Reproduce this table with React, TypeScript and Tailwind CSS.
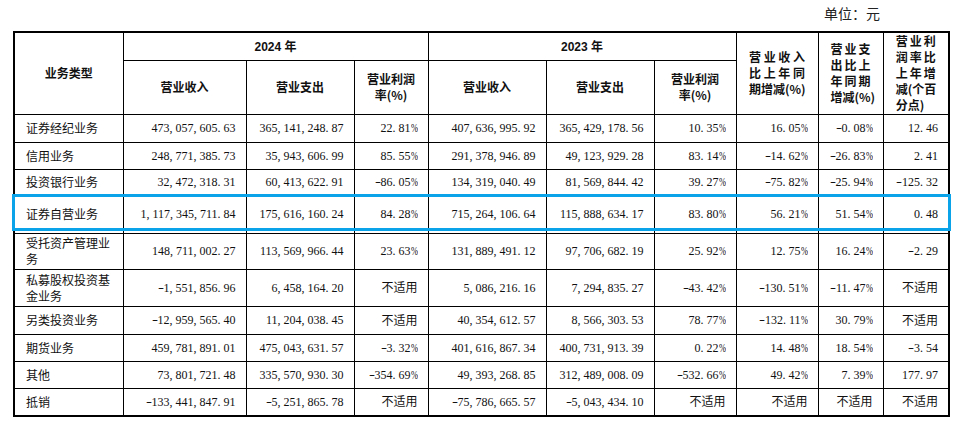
import React from 'react';

const cjk = "font-['Noto_Sans_CJK_SC',sans-serif]";

const rows: string[][] = [
  ['证券经纪业务', '473,057,605.63', '365,141,248.87', '22.81%', '407,636,995.92', '365,429,178.56', '10.35%', '16.05%', '-0.08%', '12.46'],
  ['信用业务', '248,771,385.73', '35,943,606.99', '85.55%', '291,378,946.89', '49,123,929.28', '83.14%', '-14.62%', '-26.83%', '2.41'],
  ['投资银行业务', '32,472,318.31', '60,413,622.91', '-86.05%', '134,319,040.49', '81,569,844.42', '39.27%', '-75.82%', '-25.94%', '-125.32'],
  ['证券自营业务', '1,117,345,711.84', '175,616,160.24', '84.28%', '715,264,106.64', '115,888,634.17', '83.80%', '56.21%', '51.54%', '0.48'],
  ['受托资产管理业务', '148,711,002.27', '113,569,966.44', '23.63%', '131,889,491.12', '97,706,682.19', '25.92%', '12.75%', '16.24%', '-2.29'],
  ['私募股权投资基金业务', '-1,551,856.96', '6,458,164.20', '不适用', '5,086,216.16', '7,294,835.27', '-43.42%', '-130.51%', '-11.47%', '不适用'],
  ['另类投资业务', '-12,959,565.40', '11,204,038.45', '不适用', '40,354,612.57', '8,566,303.53', '78.77%', '-132.11%', '30.79%', '不适用'],
  ['期货业务', '459,781,891.01', '475,043,631.57', '-3.32%', '401,616,867.34', '400,731,913.39', '0.22%', '14.48%', '18.54%', '-3.54'],
  ['其他', '73,801,721.48', '335,570,930.30', '-354.69%', '49,393,268.85', '312,489,008.09', '-532.66%', '49.42%', '7.39%', '177.97'],
  ['抵销', '-133,441,847.91', '-5,251,865.78', '不适用', '-75,786,665.57', '-5,043,434.10', '不适用', '不适用', '不适用', '不适用'],
];

const rowHeights = ['h-[28px]', 'h-[27px]', 'h-[26px]', 'h-[38px]', 'h-[36px]', 'h-[37px]', 'h-[28px]', 'h-[27px]', 'h-[27px]', 'h-[28px]'];

// half-width numbers, like the song typeface in the source pdf
function Num({ v }: { v: string }) {
  if (v === '不适用') return <span className={cjk}>不适用</span>;
  return (
    <span className="font-['Liberation_Serif',serif]">
      {v.split('').map((c, i) => {
        if (c === ',' || c === '.') return <span key={i} className="inline-block w-[6px] text-left">{c}</span>;
        if (c === '-') return <span key={i} className="inline-block w-[6px] text-center scale-x-150">-</span>;
        if (c === '%') return <span key={i} className="inline-block w-[7px] origin-left scale-x-[0.7]">%</span>;
        return <React.Fragment key={i}>{c}</React.Fragment>;
      })}
    </span>
  );
}

function Spread({ text }: { text: string }) {
  return (
    <div className="flex justify-between">
      {text.split('').map((c, i) => (
        <span key={i}>{c}</span>
      ))}
    </div>
  );
}

export default function App() {
  const th = `border border-black font-bold text-[12px] text-[#111] whitespace-nowrap ${cjk}`;
  return (
    <div className="w-[960px] h-[422px] bg-white overflow-hidden">
      <div className={`flex justify-end pr-[80px] pt-[3px] h-[31px] text-[14px] text-[#222] ${cjk}`}>单位：元</div>

      <div className="relative ml-[13px] w-[935px]">
        <table className="table-fixed border-collapse border-2 border-black w-[935px] text-[12px] text-[#111]">
          <colgroup>
            <col className="w-[109px]" />
            <col className="w-[123px]" />
            <col className="w-[108px]" />
            <col className="w-[74px]" />
            <col className="w-[118px]" />
            <col className="w-[108px]" />
            <col className="w-[82px]" />
            <col className="w-[82px]" />
            <col className="w-[65px]" />
            <col className="w-[66px]" />
          </colgroup>
          <thead>
            <tr className="h-[28px]">
              <th rowSpan={2} className={th}>业务类型</th>
              <th colSpan={3} className={th}>
                <span className="font-['Liberation_Sans',sans-serif]">2024 </span>年
              </th>
              <th colSpan={3} className={th}>
                <span className="font-['Liberation_Sans',sans-serif]">2023 </span>年
              </th>
              <th rowSpan={2} className={`${th} leading-[16px]`}>
                <div className="w-[56px] mx-auto text-left">
                  <Spread text="营业收入" />
                  <Spread text="比上年同" />
                  <div>期增减(%)</div>
                </div>
              </th>
              <th rowSpan={2} className={`${th} leading-[16px]`}>
                <div className="w-[40px] mx-auto text-left">
                  <Spread text="营业支" />
                  <Spread text="出比上" />
                  <Spread text="年同期" />
                  <div>增减(%)</div>
                </div>
              </th>
              <th rowSpan={2} className={`${th} leading-[16px]`}>
                <div className="w-[40px] mx-auto text-left">
                  <Spread text="营业利" />
                  <Spread text="润率比" />
                  <Spread text="上年增" />
                  <div>减(个百</div>
                  <div>分点)</div>
                </div>
              </th>
            </tr>
            <tr className="h-[54px]">
              <th className={th}>营业收入</th>
              <th className={th}>营业支出</th>
              <th className={`${th} leading-[16px]`}>营业利润<br />率(%)</th>
              <th className={th}>营业收入</th>
              <th className={th}>营业支出</th>
              <th className={`${th} leading-[16px]`}>营业利润<br />率(%)</th>
            </tr>
          </thead>
          <tbody>
            {rows.map((r, ri) => (
              <tr key={ri} className={rowHeights[ri]}>
                <td className={`border border-black pl-[11px] pr-[2px] text-left leading-[16px] ${cjk}`}>{r[0]}</td>
                {r.slice(1).map((v, ci) => (
                  <td key={ci} className="border border-black pr-[10px] text-right leading-[16px] whitespace-nowrap">
                    <Num v={v} />
                  </td>
                ))}
              </tr>
            ))}
          </tbody>
        </table>

        {/* highlight on the proprietary trading row */}
        <div className="absolute top-[163px] left-[-1px] w-[939px] h-[37px] border-[3px] border-[#0aa2e8] pointer-events-none" />
      </div>
    </div>
  );
}
